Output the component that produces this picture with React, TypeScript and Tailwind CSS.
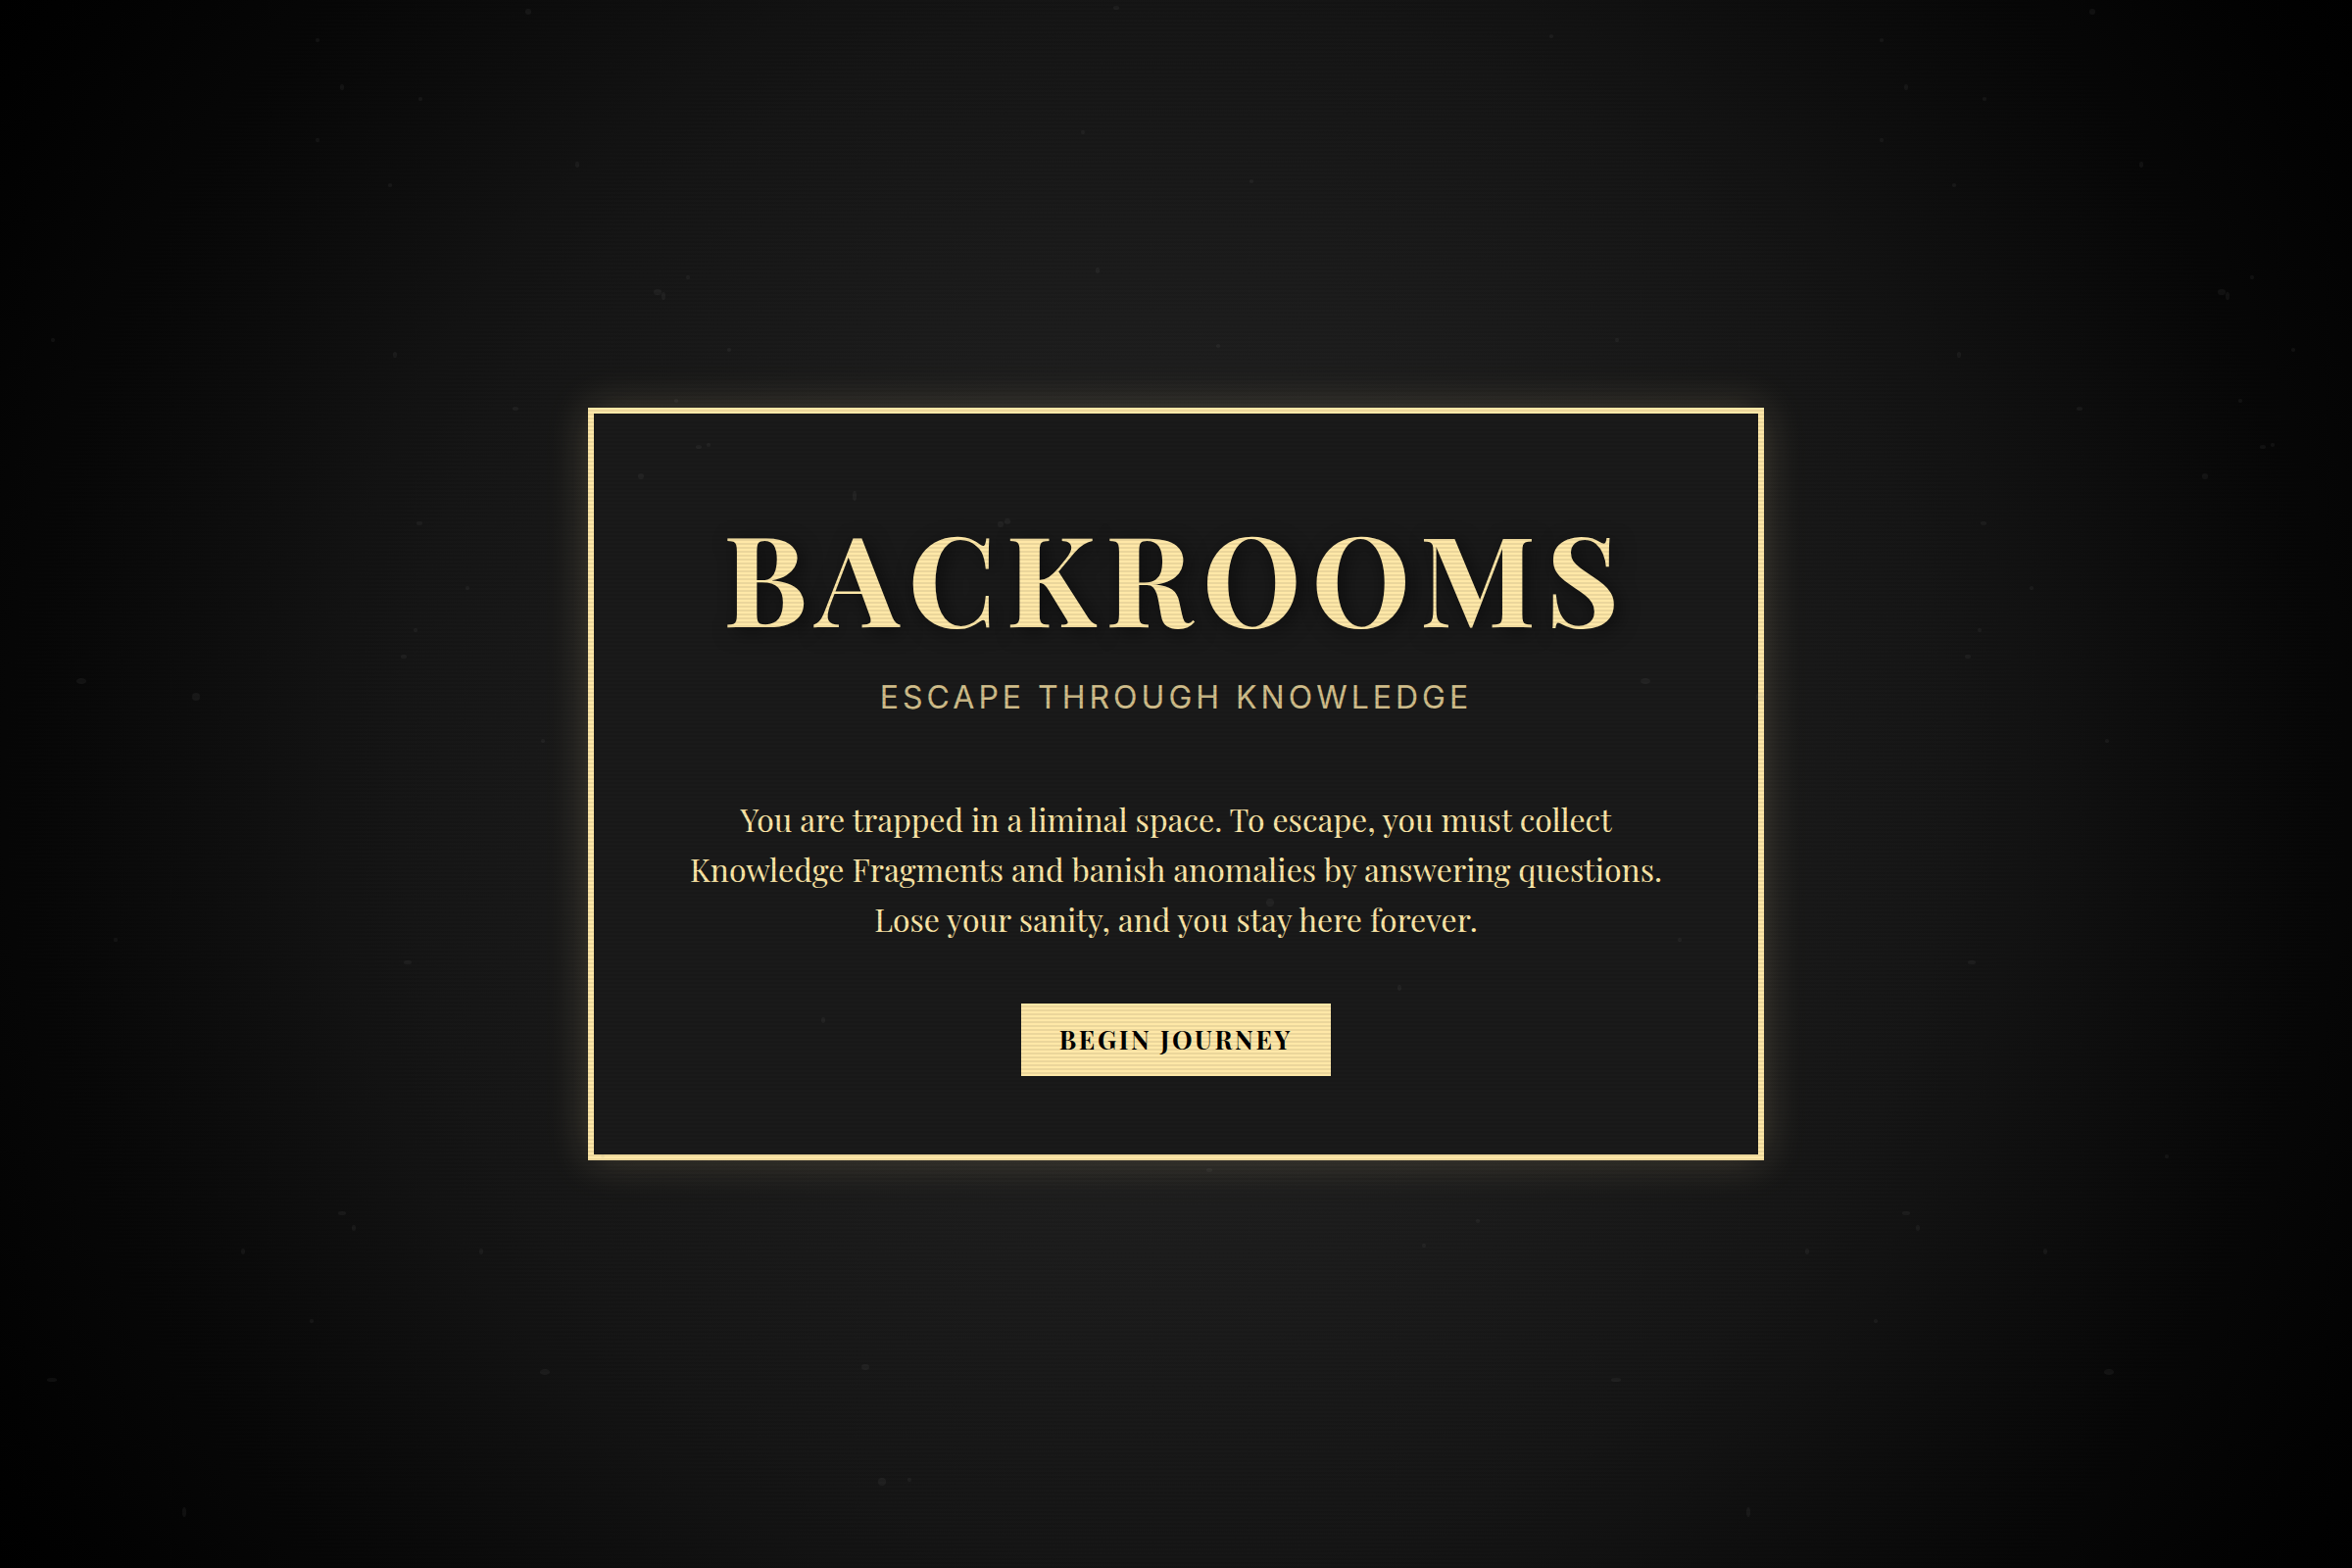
// x, y, x radius, y radius of every dust speck within one texture tile
const specks: [number, number, number, number][] = [
  [539, 12, 3, 3], [349, 89, 2, 3], [324, 41, 2, 2], [324, 143, 2, 2], [589, 168, 2, 3],
  [398, 189, 2, 2], [429, 101, 2, 2], [1277, 185, 2, 2], [1120, 276, 2, 3], [671, 298, 4, 3],
  [677, 302, 2, 4], [702, 283, 2, 2], [403, 362, 2, 3], [54, 347, 2, 2], [713, 456, 3, 2],
  [723, 454, 2, 2], [526, 417, 3, 2], [744, 357, 2, 2], [690, 409, 2, 2],
  [654, 486, 3, 3], [872, 506, 2, 5], [1021, 535, 3, 3], [1028, 532, 3, 3], [83, 695, 5, 3],
  [200, 711, 4, 4], [118, 959, 2, 2], [416, 982, 4, 2], [1296, 921, 4, 4], [1428, 1008, 2, 3],
  [840, 1041, 2, 3], [554, 756, 2, 2], [248, 1277, 2, 3], [349, 1238, 4, 2], [361, 1253, 2, 3],
  [491, 1277, 2, 3], [1234, 1194, 3, 2], [1453, 1271, 2, 2], [1508, 1246, 2, 2], [883, 1395, 4, 3],
  [556, 1400, 5, 3], [53, 1408, 5, 2], [900, 1512, 4, 4], [928, 1510, 2, 2], [188, 1543, 2, 5],
  [615, 1180, 2, 2], [318, 1348, 2, 2], [1105, 135, 2, 2], [1243, 353, 2, 2], [428, 534, 3, 2],
  [1139, 8, 3, 2], [1583, 37, 2, 2], [424, 643, 2, 2], [412, 670, 3, 2], [477, 600, 2, 2],
];

function Dust() {
  return (
    <svg aria-hidden="true" className="pointer-events-none absolute inset-0 size-full">
      <defs>
        <pattern id="dust" width="1596" height="1600" patternUnits="userSpaceOnUse">
          {specks.map(([x, y, rx, ry]) => (
            <ellipse key={`${x}-${y}`} cx={x} cy={y} rx={rx} ry={ry} fill="#808080" fillOpacity="0.09" />
          ))}
        </pattern>
      </defs>
      <rect width="100%" height="100%" fill="url(#dust)" />
    </svg>
  );
}

export default function App() {
  return (
    <main className="relative flex min-h-screen items-center justify-center overflow-hidden bg-[radial-gradient(circle,#262626_0%,#1e1e1e_30%,#161616_55%,#101010_65%,#060606_83%,#020202_93%,#000000_100%)] font-['Playfair_Display','Liberation_Serif',serif] text-[#ffe8a8]">
      <section className="flex w-1/2 flex-col items-center border-6 border-[#ffe8a8] bg-[#1a1a1a] p-20 text-center shadow-[0_0_40px_rgba(255,232,168,0.2)]">
        <h1 className="text-[128px] leading-[170px] font-bold tracking-[10px] [text-shadow:4px_4px_20px_rgba(0,0,0,0.5)]">
          BACKROOMS
        </h1>
        <p className="mt-3.5 font-['Inter',sans-serif] text-[32px] leading-[51px] tracking-[4px] opacity-80">
          ESCAPE THROUGH KNOWLEDGE
        </p>
        <p className="mt-[73px] max-w-[1000px] text-[32px] leading-[51px]">
          You are trapped in a liminal space. To escape, you must collect Knowledge Fragments and banish anomalies by
          answering questions. Lose your sanity, and you stay here forever.
        </p>
        <button
          type="button"
          className="mt-[61px] bg-[#ffe8a8] px-[39px] py-5 text-[26px] leading-[34px] font-bold tracking-widest text-black"
        >
          BEGIN JOURNEY
        </button>
      </section>
      <Dust />
      <div
        aria-hidden="true"
        className="pointer-events-none absolute inset-0 bg-[linear-gradient(transparent_50%,rgba(0,0,0,0.08)_50%)] bg-size-[100%_4px]"
      />
    </main>
  );
}
